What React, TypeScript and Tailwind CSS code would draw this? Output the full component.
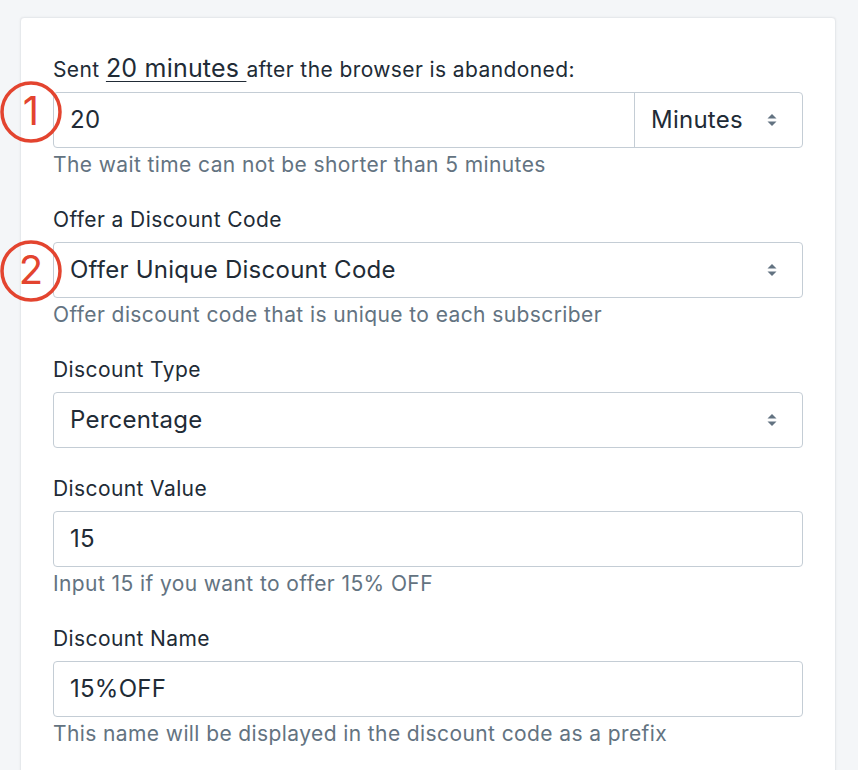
import { ReactNode } from 'react'

const ink = 'text-[#212b36]'

function Arrows() {
    return (
        <svg width="12" height="16" viewBox="0 0 12 16" className="shrink-0">
            <path d="M6 2 L10.5 6.5 L1.5 6.5 Z" fill="#637381" />
            <path d="M6 14 L10.5 9.5 L1.5 9.5 Z" fill="#637381" />
        </svg>
    )
}

function Label({ children }: { children: ReactNode }) {
    return <div className={`text-[21px] tracking-[0.4px] leading-[28px] mb-2 ${ink}`}>{children}</div>
}

function Help({ children }: { children: ReactNode }) {
    return <div className="text-[21px] tracking-[0.4px] leading-[28px] mt-[3px] text-[#637381]">{children}</div>
}

function TextBox({ value }: { value: string }) {
    return (
        <div className={`h-14 border border-[#c4cdd5] rounded-[4px] flex items-center pl-[16px] text-[24px] tracking-[0.25px] ${ink}`}>
            {value}
        </div>
    )
}

function SelectBox({ value }: { value: string }) {
    return (
        <div className={`h-14 border border-[#c4cdd5] rounded-[4px] flex items-center justify-between pl-[16px] pr-6 text-[24px] tracking-[0.25px] ${ink}`}>
            <span>{value}</span>
            <Arrows />
        </div>
    )
}

function Marker({ n, top }: { n: string; top: string }) {
    return (
        <div className={`absolute left-0 ${top} w-[62px] h-[62px] flex items-center justify-center`}>
            <svg width="62" height="62" viewBox="0 0 62 62" className="absolute inset-0">
                <ellipse cx="31" cy="31" rx="29" ry="29" fill="none" stroke="#e3442f" strokeWidth="3.5" />
            </svg>
            <span className="relative text-[40px] leading-none font-normal text-[#e3442f] -mt-[2px]">{n}</span>
        </div>
    )
}

export default function App() {
    return (
        <div className="relative h-[770px] overflow-hidden bg-[#f4f6f8] pt-[17px] pl-5" style={{ fontFamily: 'Inter, "Noto Sans", sans-serif' }}>
            <div className="w-[816px] h-[800px] bg-white rounded-[4px] border border-[#e6e9ec] shadow-[0_0_2px_rgba(63,63,68,0.08)] px-8 pt-[36px]">
                <div className="mb-[27px]">
                    <div className={`text-[21px] tracking-[0.4px] leading-[28px] mb-2 ${ink}`}>
                        Sent <span className="text-[25px] leading-[28px] tracking-[0.2px] underline underline-offset-[4px] decoration-1">20 minutes </span>after the browser is abandoned:
                    </div>
                    <div className="h-14 border border-[#c4cdd5] rounded-[4px] flex">
                        <div className={`flex-1 flex items-center pl-[16px] text-[24px] tracking-[0.25px] ${ink}`}>20</div>
                        <div className={`w-[168px] border-l border-[#c4cdd5] flex items-center justify-between pl-4 pr-6 text-[24px] tracking-[0.25px] ${ink}`}>
                            <span>Minutes</span>
                            <Arrows />
                        </div>
                    </div>
                    <Help>The wait time can not be shorter than 5 minutes</Help>
                </div>

                <div className="mb-[27px]">
                    <Label>Offer a Discount Code</Label>
                    <SelectBox value="Offer Unique Discount Code" />
                    <Help>Offer discount code that is unique to each subscriber</Help>
                </div>

                <div className="mb-[27px]">
                    <Label>Discount Type</Label>
                    <SelectBox value="Percentage" />
                </div>

                <div className="mb-[27px]">
                    <Label>Discount Value</Label>
                    <TextBox value="15" />
                    <Help>Input 15 if you want to offer 15% OFF</Help>
                </div>

                <div className="mb-[27px]">
                    <Label>Discount Name</Label>
                    <TextBox value="15%OFF" />
                    <Help>This name will be displayed in the discount code as a prefix</Help>
                </div>
            </div>

            <Marker n="1" top="top-[81px]" />
            <Marker n="2" top="top-[240px]" />
        </div>
    )
}
